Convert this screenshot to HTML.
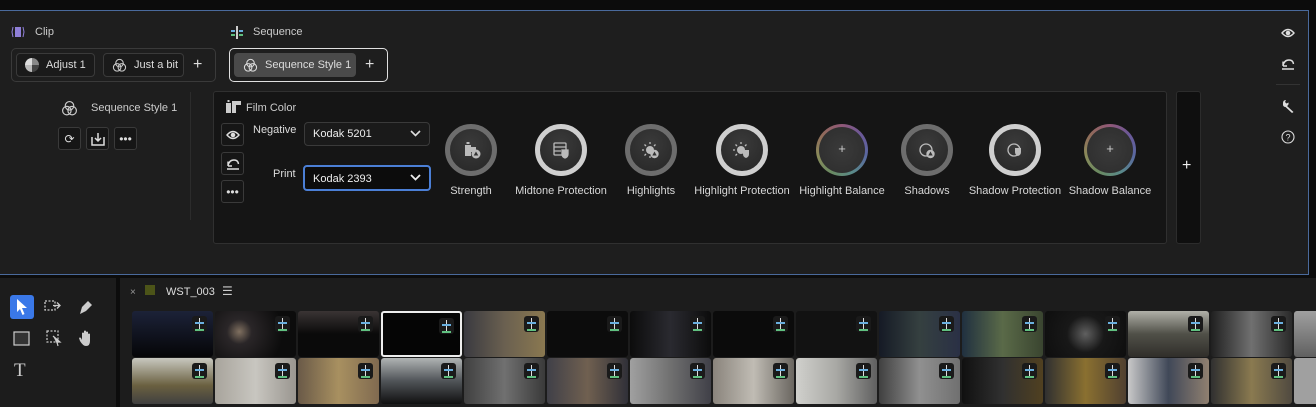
<!DOCTYPE html>
<html><head><meta charset="utf-8"><style>
*{box-sizing:border-box;margin:0;padding:0}
body{width:1316px;height:407px;background:#0c0c0c;font-family:"Liberation Sans",sans-serif;color:#d0d0d0;position:relative;overflow:hidden;font-size:11px}
.a{position:absolute}
.top{left:0;top:10px;width:1309px;height:265px;background:#1e1e1e;border:1px solid #4a6a9c;border-left:none}
.btn{position:absolute;height:24px;border:1px solid #3a3a3a;border-radius:4px;background:#1a1a1a;color:#ddd;display:flex;align-items:center;padding-left:8px;gap:7px;font-size:11px}
.sq{position:absolute;width:23px;height:23px;border:1px solid #3a3a3a;border-radius:3px;background:#161616;color:#ddd;display:flex;align-items:center;justify-content:center;font-size:12px}
.knob{position:absolute;width:52px;height:52px;border-radius:50%;border:5px solid #6d6d6d;background:radial-gradient(circle at 50% 35%,#3a3a3a,#262626)}
.knob.w{border-color:#cfcfcf}
.knob.c{border:3px solid transparent;background:radial-gradient(circle,#3a3a3a,#2c2c2c) padding-box,conic-gradient(#905878,#6a5898,#5a68a0,#5a8a8a,#6a8a62,#8a8a5a,#906a5a,#905878) border-box}
.knob.c::after{content:"+";position:absolute;left:0;right:0;top:14px;text-align:center;color:#ccc;font-size:13px}
.lbl{position:absolute;top:185px;font-size:11px;color:#d8d8d8;text-align:center;width:130px}
.dd{position:absolute;height:24px;border:1px solid #3a3a3a;border-radius:4px;background:#1a1a1a;font-size:11px;color:#eee;padding:5px 8px}
.dd svg{position:absolute;right:8px;top:7px}
.th{position:absolute;width:81px;height:46px;border-radius:3px;overflow:hidden}
.bd{position:absolute;right:6px;top:5px;width:15px;height:16px;background:#1a1a1a;border-radius:3px}
.bd::before{content:"";position:absolute;left:7px;top:2px;width:1px;height:12px;background:#ddd}
.bd::after{content:"";position:absolute;left:3px;top:6px;width:9px;height:5px;border-top:2px solid #6ab0e0;border-bottom:2px solid #60c080}
</style></head><body>
<div class="a top"></div>
<svg class="a" style="left:11px;top:26px" width="14" height="12" viewBox="0 0 14 12"><rect x="4" y="1" width="6" height="10" fill="#8f7fd8"/><path d="M2 1 L1 6 L2 11 M12 1 L13 6 L12 11" stroke="#8f7fd8" fill="none"/></svg>
<div class="a" style="left:35px;top:26px;font-size:11px;color:#ccc">Clip</div>
<svg class="a" style="left:230px;top:26px" width="14" height="13" viewBox="0 0 14 13"><rect x="6" y="0" width="2" height="13" fill="#ccc"/><rect x="1" y="4" width="4" height="2" fill="#6ab0e0"/><rect x="9" y="4" width="4" height="2" fill="#6ab0e0"/><rect x="1" y="8" width="4" height="2" fill="#60c080"/><rect x="9" y="8" width="4" height="2" fill="#60c080"/></svg>
<div class="a" style="left:253px;top:26px;font-size:11px;color:#ccc">Sequence</div>
<div class="a" style="left:11px;top:48px;width:205px;height:34px;border:1px solid #3a3a3a;border-radius:5px"></div>
<div class="btn" style="left:16px;top:53px;width:79px"><span style="width:14px;height:14px;border-radius:50%;background:conic-gradient(#888 0 25%,#444 0 50%,#bbb 0 75%,#ddd 0)"></span>Adjust 1</div>
<div class="btn" style="left:103px;top:53px;width:81px"><svg width="15" height="15" viewBox="0 0 16 16" fill="none" stroke="#ccc" stroke-width="1.1"><circle cx="8" cy="5.5" r="4"/><circle cx="5.5" cy="10" r="4"/><circle cx="10.5" cy="10" r="4"/></svg>Just a bit</div>
<div class="a" style="left:193px;top:56px;font-size:16px;color:#ddd">+</div>
<div class="a" style="left:229px;top:48px;width:159px;height:34px;border:1px solid #e0e0e0;border-radius:5px"></div>
<div class="btn" style="left:234px;top:53px;width:122px;background:#4a4a4a;border-color:#4a4a4a"><svg width="15" height="15" viewBox="0 0 16 16" fill="none" stroke="#ddd" stroke-width="1.1"><circle cx="8" cy="5.5" r="4"/><circle cx="5.5" cy="10" r="4"/><circle cx="10.5" cy="10" r="4"/></svg>Sequence Style 1</div>
<div class="a" style="left:365px;top:56px;font-size:16px;color:#ddd">+</div>
<svg class="a" style="left:61px;top:100px" width="17" height="17" viewBox="0 0 16 16" fill="none" stroke="#ccc" stroke-width="1.1"><circle cx="8" cy="5.5" r="4"/><circle cx="5.5" cy="10" r="4"/><circle cx="10.5" cy="10" r="4"/></svg>
<div class="a" style="left:91px;top:102px;color:#ccc">Sequence Style 1</div>
<div class="sq" style="left:58px;top:127px">⟳</div>
<div class="sq" style="left:86px;top:127px"><svg width="14" height="14" viewBox="0 0 14 14" fill="none" stroke="#ddd" stroke-width="1.5"><path d="M1 5 V13 H13 V5 M7 1 V9 M4 6 L7 9 L10 6"/></svg></div>
<div class="sq" style="left:114px;top:127px">•••</div>
<div class="a" style="left:190px;top:92px;width:1px;height:128px;background:#2c2c2c"></div>
<div class="a" style="left:213px;top:91px;width:954px;height:153px;background:#151515;border:1px solid #303030;border-radius:3px"></div>
<div class="a" style="left:1176px;top:91px;width:25px;height:153px;background:#0f0f0f;border:1px solid #2c2c2c;border-radius:3px"></div>
<div class="a" style="left:1182px;top:157px;font-size:16px;color:#eee">+</div>
<svg class="a" style="left:226px;top:100px" width="16" height="13" viewBox="0 0 16 13"><rect x="0" y="3" width="5" height="10" fill="#ccc"/><rect x="1.5" y="0" width="2" height="2" fill="#ccc"/><path d="M6 1 H15 V5 H10 V13 H6Z" fill="#ccc"/></svg>
<div class="a" style="left:246px;top:102px;color:#ccc">Film Color</div>
<div class="sq" style="left:221px;top:123px"><svg width="14" height="10" viewBox="0 0 14 10" fill="none" stroke="#ddd" stroke-width="1.4"><path d="M1 5 Q7 -2 13 5 Q7 12 1 5Z"/><circle cx="7" cy="5" r="1.6" fill="#ddd"/></svg></div>
<div class="sq" style="left:221px;top:152px"><svg width="14" height="12" viewBox="0 0 14 12" fill="none" stroke="#ddd" stroke-width="1.4"><path d="M2 8 Q3 2 8 2 Q12 2 12.5 6 M2 8 V3.5 M2 8 H6 M1 11 H13"/></svg></div>
<div class="sq" style="left:221px;top:180px">•••</div>
<div class="a" style="left:253px;top:124px;color:#ddd">Negative</div>
<div class="a" style="left:273px;top:168px;color:#ddd">Print</div>
<div class="dd" style="left:304px;top:122px;width:126px">Kodak 5201<svg width="11" height="7" viewBox="0 0 11 7" fill="none" stroke="#ddd" stroke-width="1.6"><path d="M1 1 L5.5 5.5 L10 1"/></svg></div>
<div class="dd" style="left:303px;top:165px;width:128px;height:26px;background:#0c0c0c;border:2px solid #4b7fd6;padding-top:6px">Kodak 2393<svg width="11" height="7" viewBox="0 0 11 7" fill="none" stroke="#eee" stroke-width="1.8"><path d="M1 1 L5.5 5.5 L10 1"/></svg></div>
<div class="knob" style="left:445px;top:124px"></div>
<div class="knob w" style="left:535px;top:124px"></div>
<div class="knob" style="left:625px;top:124px"></div>
<div class="knob w" style="left:716px;top:124px"></div>
<div class="knob c" style="left:816px;top:124px"></div>
<div class="knob" style="left:901px;top:124px"></div>
<div class="knob w" style="left:989px;top:124px"></div>
<div class="knob c" style="left:1084px;top:124px"></div>
<svg class="a" style="left:463px;top:142px" width="18" height="17" viewBox="0 0 18 17"><rect x="2" y="3" width="6" height="11" fill="#bbb"/><rect x="3.5" y="0" width="3" height="2" fill="#bbb"/><rect x="8" y="5" width="5" height="5" fill="#bbb"/><circle cx="13" cy="12" r="4.5" fill="#bbb"/><path d="M13 9.5 L15.3 13.5 H10.7Z" fill="#333"/></svg>
<svg class="a" style="left:552px;top:142px" width="18" height="17" viewBox="0 0 18 17" fill="none" stroke="#bbb" stroke-width="1.3"><rect x="2" y="1" width="12" height="12" rx="1"/><path d="M2 5 H14 M2 9 H9"/><path d="M10 8 H16 V12 Q16 15 13 16 Q10 15 10 12Z" fill="#bbb"/></svg>
<svg class="a" style="left:642px;top:142px" width="18" height="17" viewBox="0 0 18 17"><circle cx="8" cy="8" r="4" fill="#bbb"/><path d="M8 0 V2 M8 14 V16 M0 8 H2 M2.5 2.5 L4 4 M13.5 2.5 L12 4 M2.5 13.5 L4 12" stroke="#bbb" stroke-width="1.3"/><circle cx="12.5" cy="12" r="4.2" fill="#bbb"/><path d="M12.5 9.5 L14.7 13.5 H10.3Z" fill="#333"/></svg>
<svg class="a" style="left:733px;top:142px" width="18" height="17" viewBox="0 0 18 17"><circle cx="8" cy="8" r="4" fill="#bbb"/><path d="M8 0 V2 M0 8 H2 M2.5 2.5 L4 4 M13.5 2.5 L12 4 M2.5 13.5 L4 12" stroke="#bbb" stroke-width="1.3"/><path d="M10 8 H16 V12 Q16 15 13 16 Q10 15 10 12Z" fill="#bbb"/></svg>
<svg class="a" style="left:918px;top:142px" width="18" height="17" viewBox="0 0 18 17"><circle cx="8" cy="8" r="6" fill="none" stroke="#bbb" stroke-width="1.3"/><circle cx="12.5" cy="12" r="4.2" fill="#bbb"/><path d="M12.5 9.5 L14.7 13.5 H10.3Z" fill="#333"/></svg>
<svg class="a" style="left:1006px;top:142px" width="18" height="17" viewBox="0 0 18 17"><circle cx="8" cy="8" r="6" fill="none" stroke="#bbb" stroke-width="1.3"/><path d="M9 6 H15 V10 Q15 13 12 14 Q9 13 9 10Z" fill="#bbb"/></svg>
<div class="lbl" style="left:406px">Strength</div>
<div class="lbl" style="left:496px">Midtone Protection</div>
<div class="lbl" style="left:586px">Highlights</div>
<div class="lbl" style="left:677px">Highlight Protection</div>
<div class="lbl" style="left:777px">Highlight Balance</div>
<div class="lbl" style="left:862px">Shadows</div>
<div class="lbl" style="left:950px">Shadow Protection</div>
<div class="lbl" style="left:1045px">Shadow Balance</div>
<svg class="a" style="left:1281px;top:28px" width="14" height="10" viewBox="0 0 14 10" fill="none" stroke="#ddd" stroke-width="1.4"><path d="M1 5 Q7 -2 13 5 Q7 12 1 5Z"/><circle cx="7" cy="5" r="1.6" fill="#ddd"/></svg>
<svg class="a" style="left:1281px;top:58px" width="14" height="12" viewBox="0 0 14 12" fill="none" stroke="#ddd" stroke-width="1.4"><path d="M2 8 Q3 2 8 2 Q12 2 12.5 6 M2 8 V3.5 M2 8 H6 M1 11 H13"/></svg>
<div class="a" style="left:1276px;top:84px;width:24px;height:1px;background:#333"></div>
<svg class="a" style="left:1281px;top:99px" width="14" height="14" viewBox="0 0 14 14"><path d="M2 4 Q2 1 5 1 L4 3 L5.5 4.5 L7.5 3.5 Q8 6 6 7 L12.5 13 L11 14 L4.5 8 Q1.5 8 2 4Z" fill="#ddd"/></svg>
<svg class="a" style="left:1281px;top:130px" width="14" height="14" viewBox="0 0 14 14"><circle cx="7" cy="7" r="6" fill="none" stroke="#ddd" stroke-width="1.1"/><text x="7" y="10.5" font-size="9" text-anchor="middle" fill="#ddd" font-family="Liberation Sans">?</text></svg>
<div class="a" style="left:0;top:278px;width:116px;height:129px;background:#1c1c1c"></div>
<div class="a" style="left:120px;top:278px;width:1196px;height:129px;background:#1c1c1c"></div>
<div class="a" style="left:10px;top:295px;width:24px;height:24px;background:#3a78e8;border-radius:3px"></div>
<svg class="a" style="left:15px;top:298px" width="14" height="18" viewBox="0 0 14 18"><path d="M2 1 L12 10 L7 10 L9.5 16 L7.5 17 L5 11 L2 14Z" fill="#fff"/></svg>
<svg class="a" style="left:44px;top:299px" width="20" height="16" viewBox="0 0 20 16" fill="none" stroke="#ccc" stroke-width="1.3"><rect x="1" y="2" width="10" height="9" stroke-dasharray="2 1.5"/><path d="M9 6.5 H16 M13 3.5 L16 6.5 L13 9.5"/></svg>
<svg class="a" style="left:77px;top:298px" width="18" height="18" viewBox="0 0 18 18"><path d="M3 16 L5 9 L11 3 L15 7 L9 13Z" fill="#ccc"/></svg>
<svg class="a" style="left:13px;top:331px" width="20" height="18" viewBox="0 0 20 18"><rect x="1" y="1" width="15" height="13" fill="#333" stroke="#ccc" stroke-width="1.2"/></svg>
<svg class="a" style="left:46px;top:330px" width="20" height="18" viewBox="0 0 20 18" fill="none" stroke="#ccc" stroke-width="1.2"><rect x="1" y="1" width="11" height="11" stroke-dasharray="2 1.5"/><path d="M7 6 L14 12 L11 12 L12 16" fill="#ccc"/></svg>
<svg class="a" style="left:77px;top:329px" width="20" height="20" viewBox="0 0 20 20"><path d="M5 11 V4 Q6 3 7 4 V9 V2 Q8 1 9 2 V9 V3 Q10 2 11 3 V10 V5 Q12 4 13 5 V12 Q13 17 9 17 Q6 17 3 12 L2 9 Q3 8 4 9Z" fill="#ccc"/></svg>
<div class="a" style="left:14px;top:360px;font-size:19px;color:#ccc;font-family:'Liberation Serif',serif">T</div>
<div class="a" style="left:130px;top:287px;color:#999;font-size:10px">×</div>
<div class="a" style="left:145px;top:285px;width:10px;height:10px;background:#4c5418"></div>
<div class="a" style="left:166px;top:286px;color:#ddd;font-size:11px">WST_003</div>
<div class="a" style="left:222px;top:284px;color:#ccc;font-size:12px">☰</div>
<div id="thumbs"></div>
<script>
var r1=["linear-gradient(#1c2238,#050507)","radial-gradient(circle at 30% 45%,#807060 0,#2a2628 20%,#0c0c0c 70%)","linear-gradient(#3a3434,#0a0a0a 50%)","#050505","linear-gradient(90deg,#3a3a40,#6a6050,#8a7850)","#0c0c0c","linear-gradient(90deg,#0c0c0c,#2a2a30,#0c0c0c)","#0b0b0b","#121212","linear-gradient(90deg,#151a25,#354040,#2a3045)","linear-gradient(90deg,#203040,#5a6a48,#3a4530)","radial-gradient(circle,#606060 0,#181818 40%,#0e0e0e)","linear-gradient(#b0b0a8,#505048 50%,#302e2a)","linear-gradient(90deg,#202020,#707070,#2a2a2a)","linear-gradient(#a0a0a0,#606060)"];
var r2=["linear-gradient(#c8c8c0,#6a6040 60%,#404040)","linear-gradient(90deg,#a8a49c,#c8c6c0,#9a9690)","linear-gradient(90deg,#6a5a48,#a89060,#806a50)","linear-gradient(#b0b4b4,#505458 50%,#101010)","linear-gradient(90deg,#404040,#707070,#3a3a3a)","linear-gradient(90deg,#404048,#706050,#303038)","linear-gradient(90deg,#a0a0a0,#707070,#404048)","linear-gradient(90deg,#8a847c,#c0bcb4,#6a6660)","linear-gradient(90deg,#d0d0cc,#a8a8a4,#606060)","linear-gradient(90deg,#404040,#909090,#707070)","linear-gradient(90deg,#101010,#303030,#504020)","linear-gradient(90deg,#303030,#8a7030,#504030)","linear-gradient(90deg,#c8c8c8,#404858,#908070)","linear-gradient(90deg,#303030,#8a7a50,#504a40)","#a0a0a0"];
var h="";for(var i=0;i<15;i++){var x=132+i*83;h+='<div class="th" style="left:'+x+'px;top:311px;background:'+r1[i]+(i==3?';border:2px solid #eee':'')+'">'+(i<14?'<div class="bd"></div>':'')+'</div>';h+='<div class="th" style="left:'+x+'px;top:358px;background:'+r2[i]+'">'+(i<14?'<div class="bd"></div>':'')+'</div>';}
document.getElementById("thumbs").innerHTML=h;
</script>
</body></html>
